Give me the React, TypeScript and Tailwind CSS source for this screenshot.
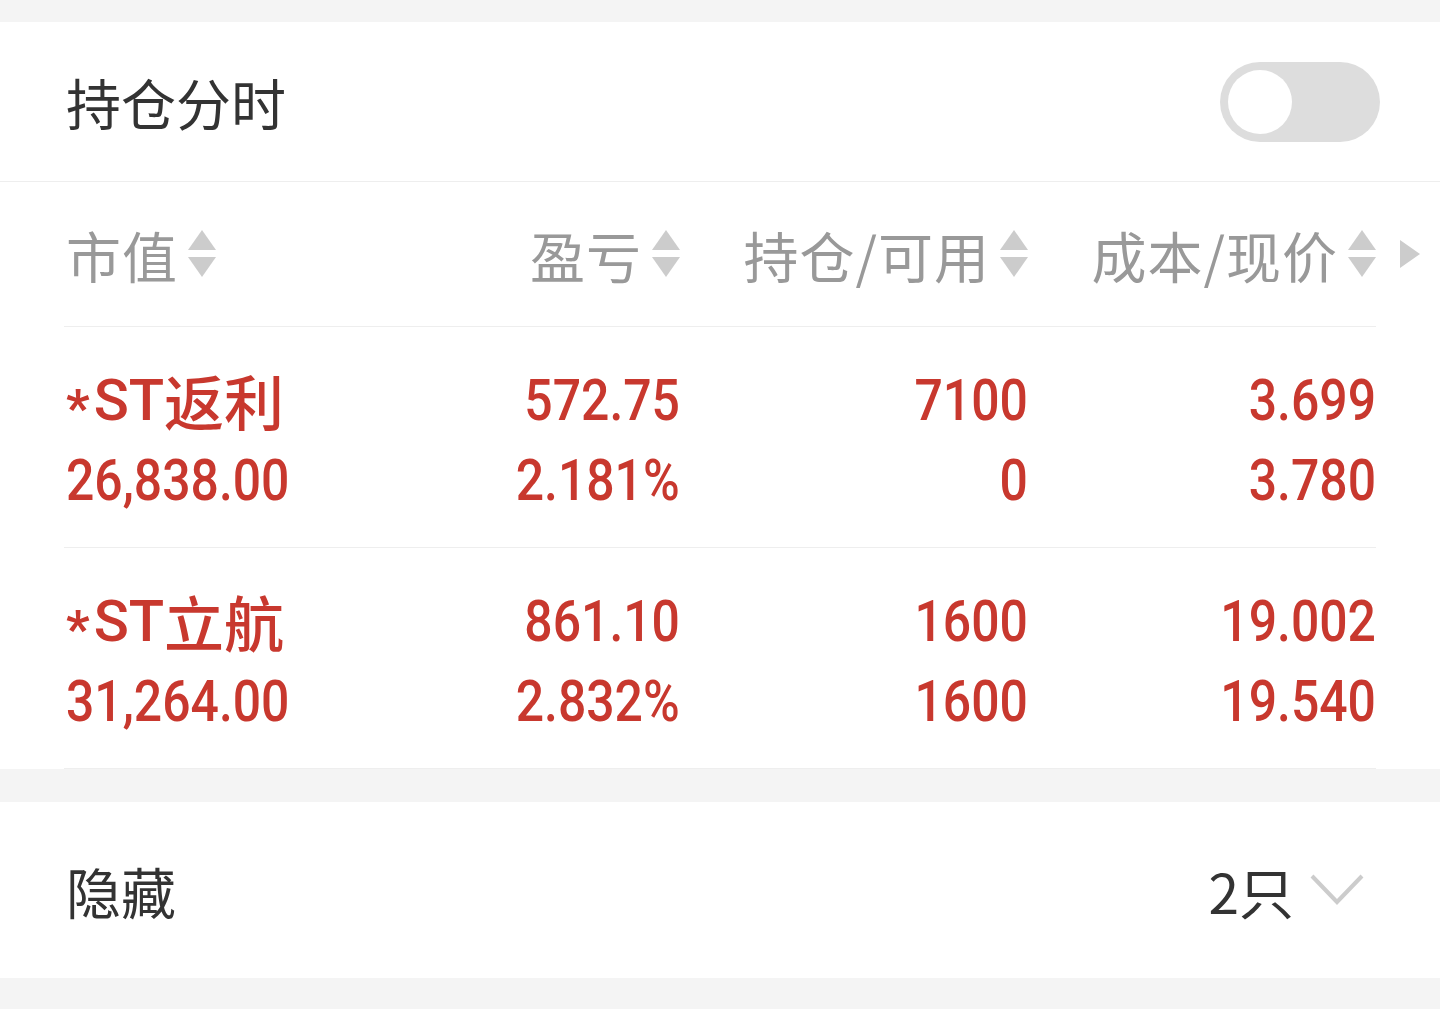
import React from "react";

const NUM = { fontFamily: 'Roboto, "Noto Sans", sans-serif' };
const CJK = { fontFamily: '"Noto Sans CJK SC", "Noto Sans", sans-serif' };

function SortArrows() {
  return (
    <svg width="28" height="48" viewBox="0 0 28 48" className="shrink-0">
      <path d="M14 0 L28 20 L0 20 Z" fill="#cccccc" />
      <path d="M0 27 L28 27 L14 47 Z" fill="#cccccc" />
    </svg>
  );
}

function HeadCell({ label, right }: { label: string; right?: boolean }) {
  return (
    <div className={"flex items-center gap-[10px] " + (right ? "justify-end" : "justify-start")}>
      <span className="text-[55px] leading-none text-[#999999] tracking-[1px]" style={CJK}>
        {label}
      </span>
      <SortArrows />
    </div>
  );
}

function Num({ v, left }: { v: string; left?: boolean }) {
  return (
    <div className="h-[80px] flex items-center text-[58px] leading-none font-medium" style={NUM}>
      <span className={"inline-block scale-x-[0.86] " + (left ? "origin-left" : "origin-right")}>{v}</span>
    </div>
  );
}

type Row = { name: string; value: string; pnl: string; pct: string; hold: string; avail: string; cost: string; price: string };

const rows: Row[] = [
  { name: "返利", value: "26,838.00", pnl: "572.75", pct: "2.181%", hold: "7100", avail: "0", cost: "3.699", price: "3.780" },
  { name: "立航", value: "31,264.00", pnl: "861.10", pct: "2.832%", hold: "1600", avail: "1600", cost: "19.002", price: "19.540" },
];

function PositionRow({ r }: { r: Row }) {
  return (
    <div className="px-[64px]">
      <div className="grid grid-cols-[266px_348px_348px_348px] pt-[33px] pb-[27px] border-b border-[#eeeeee] text-[#c8382e] pl-[2px]">
        <div className="flex flex-col">
          <div className="h-[80px] flex items-center leading-none">
            <span className="text-[52px] font-bold mr-[4px] translate-y-[9px]" style={NUM}>*</span>
            <span className="text-[58px] font-medium" style={NUM}>ST</span>
            <span style={CJK} className="text-[60px] font-medium">{r.name}</span>
          </div>
          <Num v={r.value} left />
        </div>
        {[
          [r.pnl, r.pct],
          [r.hold, r.avail],
          [r.cost, r.price],
        ].map((pair, i) => (
          <div key={i} className="flex flex-col items-end">
            <Num v={pair[0]} />
            <Num v={pair[1]} />
          </div>
        ))}
      </div>
    </div>
  );
}

export default function App() {
  return (
    <div className="w-[1440px] h-[1036px] bg-white overflow-hidden">
      <div className="h-[22px] bg-[#f4f4f4]" />

      <div className="h-[160px] flex items-center justify-between pl-[66px] pr-[60px] border-b border-[#eeeeee]">
        <span className="text-[55px] leading-none text-[#333333]" style={CJK}>
          持仓分时
        </span>
        <div className="w-[160px] h-[80px] rounded-full bg-[#dddddd] p-[8px] flex items-center">
          <div className="w-[64px] h-[64px] rounded-full bg-white" />
        </div>
      </div>

      <div className="px-[64px]">
        <div className="h-[145px] grid grid-cols-[266px_348px_348px_348px_64px] items-center border-b border-[#eeeeee] pl-[2px]">
          <HeadCell label="市值" />
          <HeadCell label="盈亏" right />
          <HeadCell label="持仓/可用" right />
          <HeadCell label="成本/现价" right />
          <div className="flex items-center pl-[24px]">
            <svg width="20" height="28" viewBox="0 0 20 28">
              <path d="M0 0 L20 14 L0 28 Z" fill="#cccccc" />
            </svg>
          </div>
        </div>
      </div>

      {rows.map((r) => (
        <PositionRow key={r.name} r={r} />
      ))}

      <div className="h-[33px] bg-[#f4f4f4]" />

      <div className="h-[176px] flex items-center justify-between pl-[66px] pr-[76px]">
        <span className="text-[55px] leading-none text-[#333333]" style={CJK}>
          隐藏
        </span>
        <div className="flex items-center gap-[16px]">
          <span className="text-[55px] leading-none text-[#333333]" style={CJK}>
            2只
          </span>
          <svg width="54" height="32" viewBox="0 0 54 32">
            <path d="M2 2 L27 28 L52 2" fill="none" stroke="#cccccc" strokeWidth="4" />
          </svg>
        </div>
      </div>

      <div className="h-[31px] bg-[#f4f4f4]" />
    </div>
  );
}
